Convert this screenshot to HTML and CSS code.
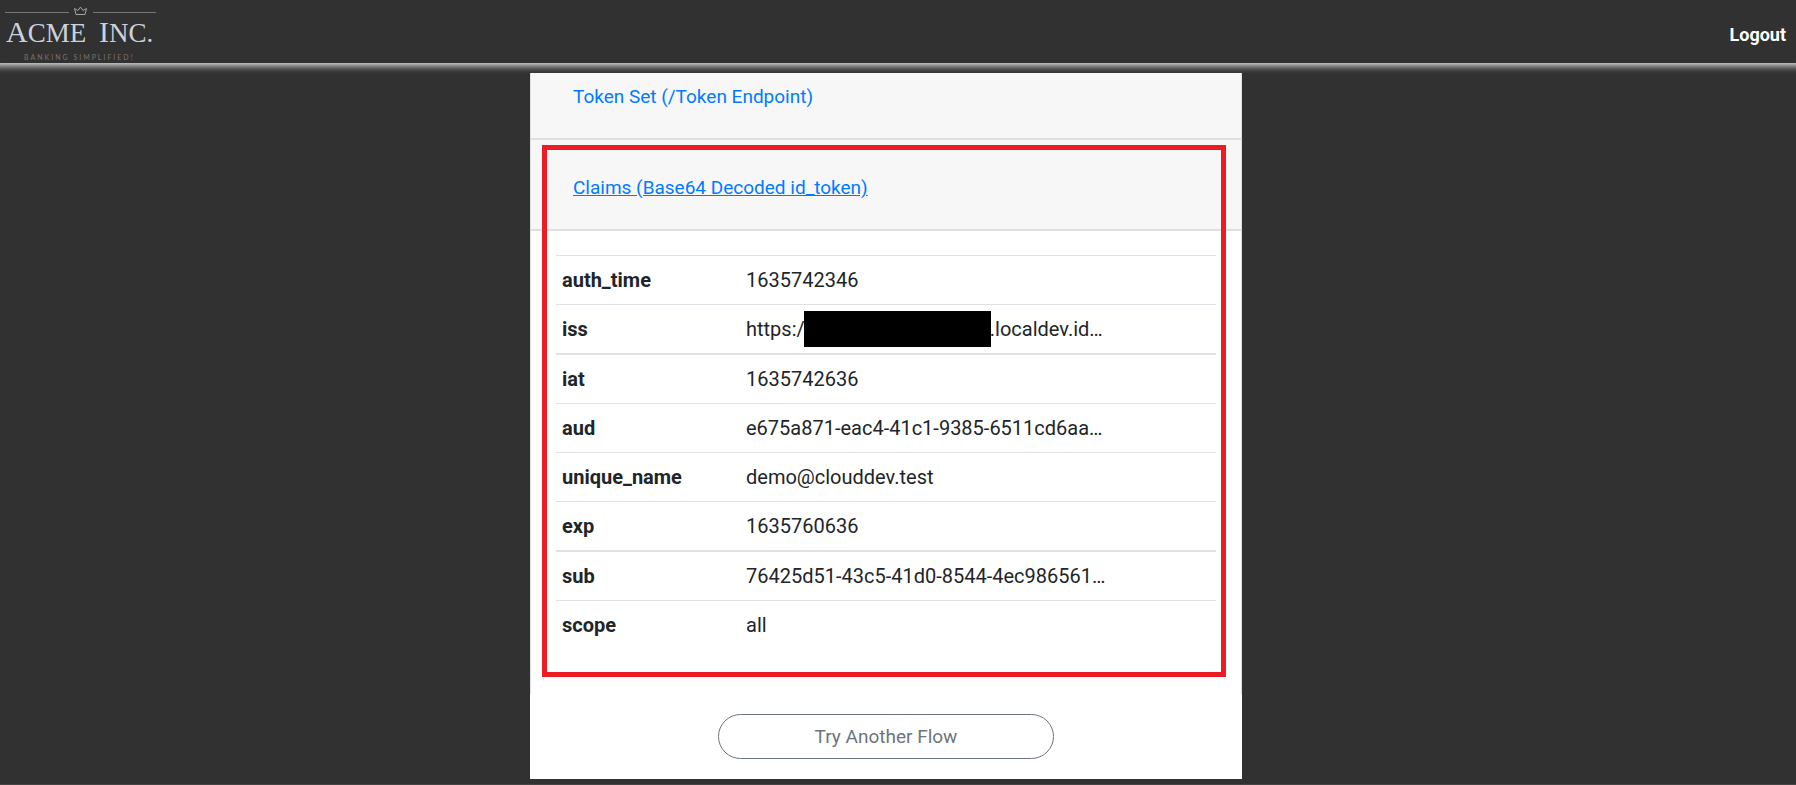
FILE: index.html
```html
<!DOCTYPE html>
<html lang="en">
  <head>
    <meta charset="UTF-8" />
    <meta name="viewport" content="width=device-width, initial-scale=1.0" />
    <title>Acme Inc.</title>
    <link rel="stylesheet" href="styles.css">
  </head>
  <body>
    <header class="navbar">
      <a href="#" class="brand" aria-label="Acme Inc.">
        <svg class="logo" viewBox="0 0 160 62" width="160" height="62">
          <g fill="none" stroke="#777" stroke-width="1">
            <path d="M5 11.5H69M93 11.5H156" />
            <path stroke="#a8a49c" d="M76 13.5L74.5 7.5L78 9.5L80.5 6L83 9.5L86.5 7.5L85 13.5Z" />
          </g>
          <g class="logo-name">
            <text x="6" y="41"><tspan font-size="30">A</tspan><tspan font-size="27">CME</tspan></text>
            <text x="99" y="41"><tspan font-size="30">I</tspan><tspan font-size="27">NC.</tspan></text>
          </g>
          <text class="logo-tag" x="24" y="59">BANKING SIMPLIFIED!</text>
        </svg>
      </a>
      <a href="#" class="logout">Logout</a>
    </header>

    <main>
      <div class="card">
        <div class="accordion">
          <div class="card-header">
            <a href="#">Token Set (/Token Endpoint)</a>
          </div>
          <div class="card-header claims-header">
            <a href="#" class="active">Claims (Base64 Decoded id_token)</a>
          </div>
          <div class="card-body">
            <table class="claims">
              <tr><th scope="row">auth_time</th><td>1635742346</td></tr>
              <tr>
                <th scope="row">iss</th>
                <td><div class="issuer">https:/<span class="redacted"></span>.localdev.id…</div></td>
              </tr>
              <tr class="thick"><th scope="row">iat</th><td>1635742636</td></tr>
              <tr><th scope="row">aud</th><td>e675a871-eac4-41c1-9385-6511cd6aa…</td></tr>
              <tr><th scope="row">unique_name</th><td>demo@clouddev.test</td></tr>
              <tr><th scope="row">exp</th><td>1635760636</td></tr>
              <tr class="thick"><th scope="row">sub</th><td>76425d51-43c5-41d0-8544-4ec986561…</td></tr>
              <tr><th scope="row">scope</th><td>all</td></tr>
            </table>
          </div>
          <div class="highlight"></div>
        </div>
        <div class="actions">
          <button type="button" class="btn">Try Another Flow</button>
        </div>
      </div>
    </main>

    <footer></footer>
  </body>
</html>
```

FILE: styles.css
```css
* {
  box-sizing: border-box;
}

body {
  display: flex;
  flex-direction: column;
  min-height: 100vh;
  margin: 0;
  background-color: #313131;
  color: #212529;
  font-family: Roboto, sans-serif;
  font-size: 20px;
  line-height: 28px;
}

a {
  color: #007bff;
  text-decoration: none;
}

.navbar {
  display: flex;
  justify-content: space-between;
  align-items: center;
  height: 63px;
  padding-right: 10px;
  background-color: #313131;
  box-shadow: 0 -6px 8px 8px #fff;
}

.logo {
  display: block;
}

.logo-name {
  fill: #ccd2dc;
  font-family: "Liberation Serif", serif;
}

.logo-tag {
  fill: #77736c;
  font-family: Lato, sans-serif;
  font-size: 7px;
  letter-spacing: 2px;
}

.logout {
  margin-top: 6px;
  color: #fff;
  font-size: 18px;
  font-weight: 700;
}

main {
  padding: 10px 24px 0 0;
}

.card {
  position: relative;
  max-width: 712px;
  margin: 0 auto;
  background-color: #fff;
}

.accordion {
  position: relative;
  border: solid #dfdfdf;
  border-width: 0 1px;
}

.card-header {
  height: 67px;
  padding: 10px 42px;
  background-color: #f7f7f7;
  border-bottom: 2px solid #dfdfdf;
  font-size: 19px;
  line-height: 27px;
}

.claims-header {
  height: 91px;
  padding-top: 34px;
}

.active {
  text-decoration: underline;
}

.card-body {
  padding: 24px 25px 45px;
}

.claims {
  width: 100%;
  border-spacing: 0;
  text-align: left;
}

.claims th,
.claims td {
  padding: 10px 6px;
  border-top: 1px solid #dee2e6;
}

.claims th {
  width: 184px;
  font-weight: 700;
}

.claims .thick th,
.claims .thick td {
  border-top-width: 2px;
}

.issuer {
  display: flex;
  align-items: center;
}

.redacted {
  width: 187px;
  height: 36px;
  margin: -4px -1px;
  background-color: #000;
}

/* red frame over the claims section */
.highlight {
  position: absolute;
  top: 72px;
  right: 15px;
  bottom: 17px;
  left: 11px;
  border: 5px solid #ed1c24;
}

.actions {
  display: flex;
  justify-content: center;
  padding: 20px;
}

.btn {
  width: 336px;
  padding: 8px 16px;
  background-color: #fff;
  border: 1px solid #6c757d;
  border-radius: 23px;
  color: #6c757d;
  font-family: inherit;
  font-size: 19px;
  line-height: 27px;
}

footer {
  height: 1px;
  margin-top: auto;
  background-color: #444;
}
```
